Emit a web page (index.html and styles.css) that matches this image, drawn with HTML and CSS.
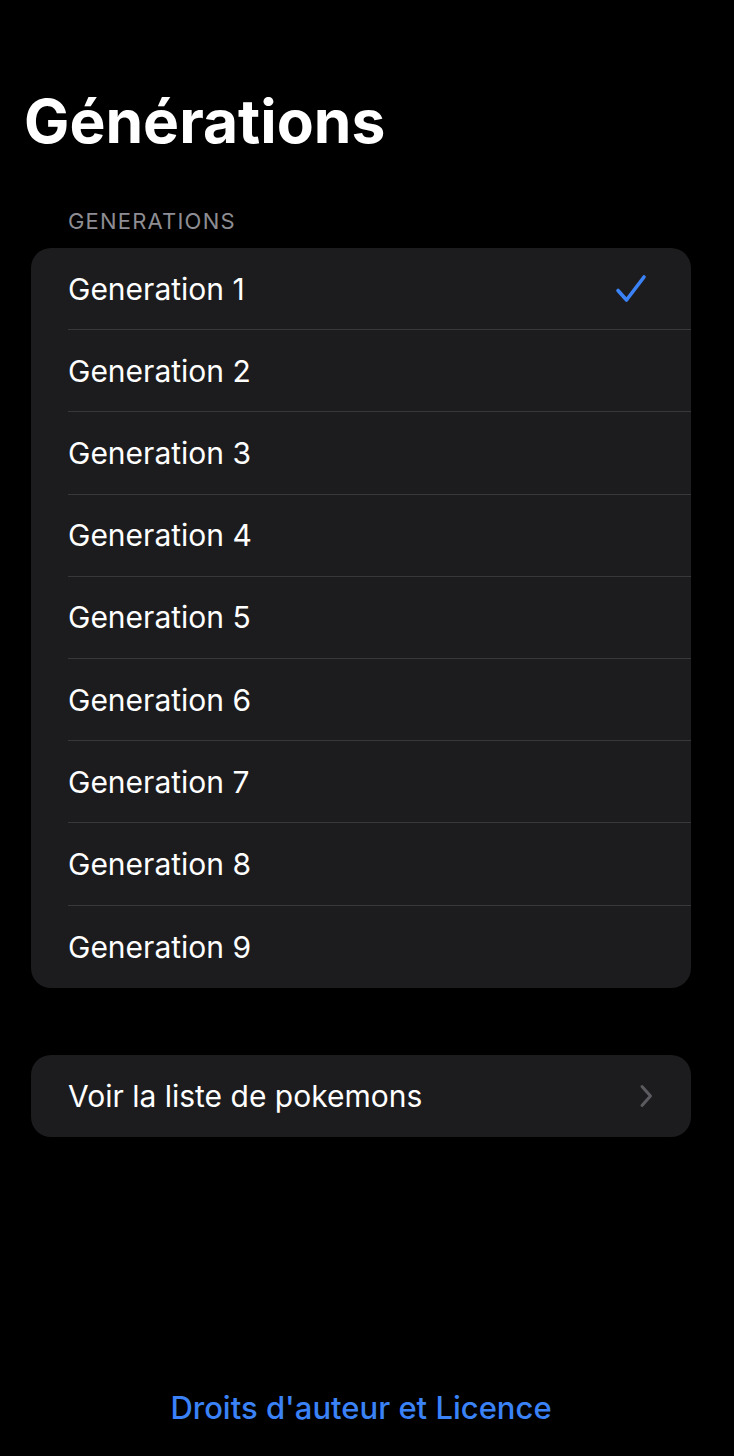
FILE: index.html
```html
<!DOCTYPE html>
<html lang="fr">
<head>
<meta charset="utf-8">
<link rel="stylesheet" href="styles.css">
</head>
<body>
<main class="screen">
  <h1 class="title">Générations</h1>
  <section class="group">
    <div class="group-header">GENERATIONS</div>
    <ul class="card">
      <li class="row"><span class="label">Generation 1</span>
        <svg class="check" viewBox="0 0 32 30" width="32" height="30"><path d="M3 16.5 L11.5 26 L29 3" fill="none" stroke="#3a82f6" stroke-width="3.6" stroke-linecap="round" stroke-linejoin="round"/></svg>
      </li>
      <li class="row"><span class="label">Generation 2</span></li>
      <li class="row"><span class="label">Generation 3</span></li>
      <li class="row"><span class="label">Generation 4</span></li>
      <li class="row"><span class="label">Generation 5</span></li>
      <li class="row"><span class="label">Generation 6</span></li>
      <li class="row"><span class="label">Generation 7</span></li>
      <li class="row"><span class="label">Generation 8</span></li>
      <li class="row"><span class="label">Generation 9</span></li>
    </ul>
  </section>
  <section class="group group-nav">
    <ul class="card">
      <li class="row"><span class="label">Voir la liste de pokemons</span>
        <svg class="chevron" viewBox="0 0 14 24" width="14" height="24"><path d="M3 2.5 L11.5 12 L3 21.5" fill="none" stroke="#5a5a5f" stroke-width="3" stroke-linecap="round" stroke-linejoin="round"/></svg>
      </li>
    </ul>
  </section>
  <div class="spacer"></div>
  <footer class="footer"><a class="link" href="#">Droits d'auteur et Licence</a></footer>
</main>
</body>
</html>
```
FILE: styles.css
```css
* { box-sizing: border-box; }
html, body { margin: 0; padding: 0; background: #000; }
body {
  font-family: Inter, "Noto Sans", "Liberation Sans", sans-serif;
  color: #fff;
  width: 734px;
  height: 1456px;
}
.screen {
  display: flex;
  flex-direction: column;
  height: 1456px;
  padding: 0 43px 0 31px;
}
.title {
  margin: 83px 0 0 -7px;
  font-size: 60.5px;
  font-weight: 700;
  line-height: 76px;
  letter-spacing: 0;
}
.group { margin-top: 50px; }
.group-header {
  padding-left: 37px;
  font-size: 22px;
  line-height: 24px;
  color: #8d8d93;
  letter-spacing: 1.2px;
  margin-bottom: 15px;
}
.card {
  list-style: none;
  margin: 0;
  padding: 0;
  background: #1c1c1e;
  border-radius: 20px;
  overflow: hidden;
}
.row {
  position: relative;
  display: flex;
  align-items: center;
  justify-content: space-between;
  height: 82.2px;
  margin-left: 37px;
  padding-right: 44px;
  border-bottom: 1px solid #38383a;
}
.row:last-child { border-bottom: none; }
.label {
  font-size: 30px;
  font-weight: 400;
  color: #fff;
}
.check { display: block; }
.group-nav { margin-top: 67px; }
.group-nav .row { height: 82px; padding-right: 38px; }
.spacer { flex: 1; }
.footer {
  display: flex;
  justify-content: center;
  padding-bottom: 30px;
}
.link {
  color: #3a82f6;
  text-decoration: none;
  font-size: 31px;
  font-weight: 500;
}
```
